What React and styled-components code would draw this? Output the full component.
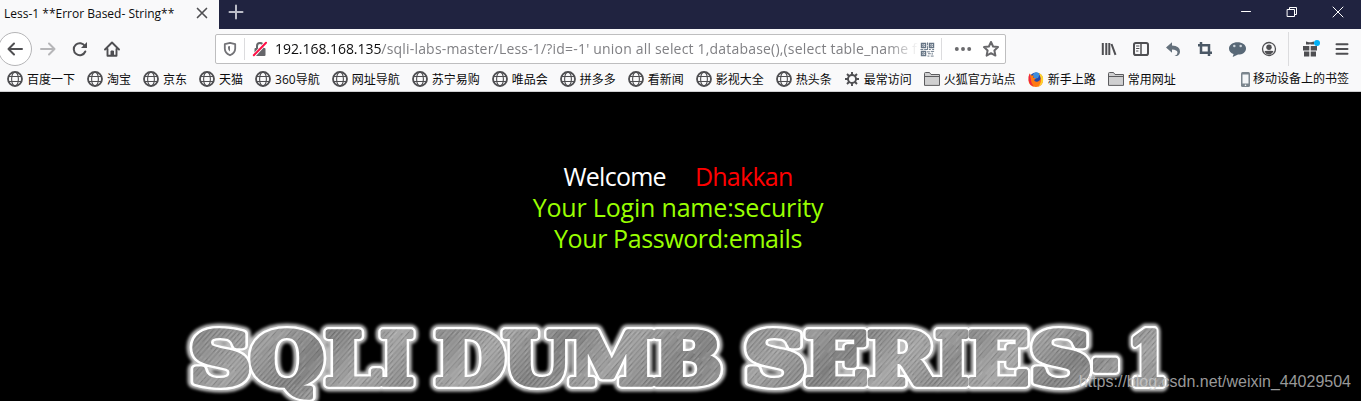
import React from "react"
import styled, { createGlobalStyle } from "styled-components"

const GlobalStyle = createGlobalStyle`
  body {
    margin: 0;
    background: #000;
    overflow: hidden;
    font-family: "Open Sans", "Noto Sans CJK SC", sans-serif;
  }
  svg {
    display: block;
    flex: none;
  }
`
const Window = styled.div`
  width: 1361px;
  height: 401px;
  overflow: hidden;
  background: #000;
`
const TabStrip = styled.div`
  display: flex;
  height: 29px;
  background: #202340;
`
const Tab = styled.div`
  display: flex;
  align-items: center;
  justify-content: space-between;
  box-sizing: border-box;
  width: 219px;
  height: 29px;
  padding: 0 11px 3px 4px;
  background: #f9f9fa;
  color: #0c0c0d;
  font-size: 12px;
  white-space: nowrap;
`
const NewTab = styled.div`
  padding: 4px 9px;
`
const WindowControls = styled.div`
  display: flex;
  margin-left: auto;
`
const ControlButton = styled.div`
  display: flex;
  justify-content: center;
  width: 46px;
  padding-top: 4px;
`
const NavBar = styled.div`
  display: flex;
  align-items: center;
  height: 40px;
  background: #f9f9fa;
`
const BackButton = styled.div`
  display: flex;
  align-items: center;
  justify-content: center;
  box-sizing: border-box;
  width: 34px;
  height: 34px;
  margin-left: -2px;
  border: 1px solid #b5b5b7;
  border-radius: 50%;
  background: #fff;
`
const ToolButton = styled.div`
  display: flex;
  align-items: center;
  justify-content: center;
  width: 32px;
  height: 32px;
`
const UrlBar = styled.div`
  display: flex;
  align-items: center;
  box-sizing: border-box;
  width: 791px;
  height: 30px;
  margin-left: 87px;
  padding: 0 6px;
  border: 1px solid #bebebf;
  border-radius: 2px;
  background: #fff;
`
const Divider = styled.div`
  width: 1px;
  height: ${props => props.$height}px;
  margin: ${props => props.$margin};
  background: #dcdcde;
`
const Url = styled.div`
  width: 644px;
  margin-left: 7px;
  margin-right: 1px;
  overflow: hidden;
  color: #808084;
  font-size: 14px;
  line-height: 24px;
  letter-spacing: 0.19px;
  white-space: nowrap;
  mask-image: linear-gradient(to right, #000 612px, transparent 644px);
`
const Host = styled.span`
  color: #0c0c0d;
  letter-spacing: -0.05px;
`
const Tools = styled.div`
  display: flex;
  align-items: center;
  margin-left: auto;
  padding-right: 3px;
`
const Bookmarks = styled.div`
  display: flex;
  gap: 12px;
  box-sizing: border-box;
  height: 23px;
  padding: 0 12px 0 7px;
  border-bottom: 1px solid #cfcfd1;
  background: #f9f9fa;
`
const Bookmark = styled.div`
  display: flex;
  align-items: center;
  gap: ${props => props.$gap || 4}px;
  height: 20px;
  margin-left: ${props => (props.$right ? "auto" : "0")};
  color: #0c0c0d;
  font-size: 12px;
  line-height: 20px;
  white-space: nowrap;
`
const Label = styled.span`
  padding-top: 1px;
`
const Page = styled.div`
  position: relative;
  height: 309px;
  background: #000;
`
const Login = styled.div`
  padding: 69px 5px 0 0;
  height: 94px;
  font-size: 25px;
  line-height: 31px;
  text-align: center;
`
const Line = styled.div`
  color: ${props => props.$color || "#99ff00"};
  letter-spacing: ${props => props.$spacing || "0"};
`
const Name = styled.span`
  margin-left: 29px;
  color: #f00;
`
const Watermark = styled.div`
  position: absolute;
  right: 10px;
  bottom: 9px;
  color: rgba(205, 205, 205, 0.75);
  font-family: "Liberation Sans", sans-serif;
  font-size: 16px;
  line-height: 20px;
`

const Icon = ({ size = 16, children, color = "#4f4f52", w = 2 }) => (
  <svg
    width={size}
    height={size}
    viewBox="0 0 16 16"
    fill="none"
    stroke={color}
    strokeWidth={w}
    strokeLinecap="round"
    strokeLinejoin="round"
  >
    {children}
  </svg>
)

const Globe = () => (
  <Icon w={1.1}>
    <circle cx="8" cy="8" r="7" strokeWidth="1.8" />
    <ellipse cx="8" cy="8" rx="3.4" ry="7" />
    <path d="M1.5 5.5h13M1.5 10.5h13" />
  </Icon>
)
const Gear = () => (
  <Icon w={1.9}>
    <circle cx="8" cy="8" r="4" />
    <path
      d="M8 1v3M8 12v3M1 8h3M12 8h3M3 3l2 2M11 11l2 2M3 13l2-2M11 5l2-2"
      strokeLinecap="butt"
    />
  </Icon>
)
const Folder = () => (
  <Icon w={1} color="#5c5c5f">
    <path d="M.5 14V2.5Q.5 1.5 1.5 1.5h4l1.5 2h8.5V14z" fill="#cfcfd0" />
    <path d="M1 5.5h14.500" />
  </Icon>
)
const Firefox = () => (
  <Icon>
    <circle cx="8" cy="8.200" r="6.800" fill="#2748a8" stroke="none" />
    <path d="M5 3q3-3.500 7 0l-2 4-4 1z" fill="#3d8fe0" stroke="none" />
    <path
      d="M1.500 2.500l2 2 2.500 0-1 2 3 1-2 1.500q1 2.500 4 1.500 3-1 2.500-5l-1.500-3.500q4 2 4 7 0 6.500-7 7Q.5 15.500.5 9 .4 5 1.500 2.500z"
      fill="#ff7a13"
      stroke="none"
    />
    <path d="M11 2q4.500 2 4.200 7-.5 5-5 6.500 3.500-4 2.800-8z" fill="#ffd52e" stroke="none" />
    <path d="M1.500 2.500Q0 6 .7 10q1 4 5 5.500-3-4-3-8z" fill="#ee2644" stroke="none" />
  </Icon>
)
const Phone = () => (
  <svg width="9" height="15" viewBox="0 0 9 15">
    <rect width="9" height="15" rx="1.500" fill="#7b858d" />
    <path d="M1.500 2.500h6v9h-6z" fill="#f4f6f8" />
    <circle cx="4.500" cy="13.200" r=".8" fill="#fff" />
  </svg>
)

const Back = () => (
  <Icon>
    <path d="M15 8H1.500M7 2.500L1.500 8 7 13.500" />
  </Icon>
)
const Forward = () => (
  <Icon color="#b6b6b8">
    <path d="M1 8h13.500M9 2.500L14.500 8 9 13.500" />
  </Icon>
)
const Reload = () => (
  <Icon>
    <path d="M13.300 10.500A6 6 0 1 1 13 5.200" />
    <path d="M15 1v6H9z" fill="#4f4f52" stroke="none" />
  </Icon>
)
const Home = () => (
  <Icon w={1.9}>
    <path d="M1 8.500l7-7 7 7M3.500 8v6.800h9V8" />
    <path d="M7 14v-4h2.500v4z" fill="#4f4f52" strokeWidth="1" />
  </Icon>
)
const Shield = () => (
  <Icon color="#737377" w={1.800}>
    <path d="M8 1.800l5.200 1.400v4.300q0 4.500-5.200 6.800-5.200-2.300-5.200-6.800V3.200z" />
    <path d="M8 5v5.500Q6 9 6 7V5.500z" fill="#737377" stroke="none" />
  </Icon>
)
const Lock = () => (
  <Icon color="#66666a">
    <path d="M5 7V5a3 3 0 0 1 6 0v2" />
    <rect x="2.500" y="7" width="11" height="8" rx="1" fill="#66666a" stroke="none" />
    <path d="M2 14.500L14 1.500" stroke="#fff" strokeWidth="3.500" />
    <path d="M1.800 14.300L14 1.700" stroke="#ff0f45" />
  </Icon>
)
const QrCode = () => (
  <Icon color="#667585" w={1.300} size={15}>
    <path d="M1.500 1.500h4.500V6H1.500zM10 1.500h4.500V6H10zM1.500 10H6v4.500H1.500z" strokeLinejoin="miter" />
    <path
      d="M3 3h1.500v1.500H3zM11.500 3H13v1.500h-1.500zM3 11.500h1.500V13H3zM8 1v2M8 5v2M1 8h2M5 8h3M10 8h1M13.500 8h1M8 10.500h2M12 10h2.500M9 12.500h2M13 12v1M8.500 15h1M12 15h2"
      strokeWidth="1"
      strokeLinecap="square"
    />
  </Icon>
)
const Dots = () => (
  <Icon size={18}>
    <g fill="#6a6a6d" stroke="none">
      <circle cx="2.500" cy="8" r="1.750" />
      <circle cx="8" cy="8" r="1.750" />
      <circle cx="13.500" cy="8" r="1.750" />
    </g>
  </Icon>
)
const Star = () => (
  <Icon color="#68686b" w={2}>
    <path d="M8 1l2.100 4.500 4.900.6-3.600 3.400 1 5.100L8 12.200l-4.400 2.400 1-5.100L1 6.100l4.900-.6z" />
  </Icon>
)
const Library = () => (
  <Icon>
    <path d="M1.800 2v12M5.300 2v12M8.300 2v12M10.500 3l4 10.800" strokeLinecap="butt" />
  </Icon>
)
const Sidebar = () => (
  <Icon>
    <rect x="1" y="2" width="14" height="12" rx="1.800" />
    <path d="M8 2v12" strokeWidth="1.500" />
    <path d="M3.500 5h2.500M3.500 7.500h2.500M3.500 10h1.500" strokeWidth="1" />
  </Icon>
)
const Undo = () => (
  <Icon>
    <path
      d="M1 6.500L7 1.300v3.200q8 .5 8 6 0 3-3 4.500H9.500q3-1 3-3.300Q12.300 8.700 7 8.500v3.200z"
      fill="#65717c"
      stroke="none"
    />
  </Icon>
)
const Crop = () => (
  <Icon color="#4c5966" w={2.500}>
    <path d="M4 1v10.800h11M1 4.200h11V15" strokeLinecap="butt" strokeLinejoin="miter" />
  </Icon>
)
const Chat = () => (
  <Icon size={17}>
    <path
      d="M8 1.200c4.300 0 8 2.300 8 5.800s-3.200 5.800-7.500 5.800L3.500 15l.8-2.700C1.800 11.500 0 9.600 0 7.200c0-3.500 3.700-6 8-6z"
      fill="#596977"
      stroke="none"
    />
    <circle cx="5" cy="4.700" r="1.200" fill="#ccd4da" stroke="none" />
    <circle cx="11" cy="4.700" r="1.200" fill="#ccd4da" stroke="none" />
  </Icon>
)
const Account = () => (
  <Icon w={1.300}>
    <circle cx="8" cy="8" r="6.500" />
    <circle cx="8" cy="6.200" r="2.700" fill="#4f4f52" stroke="none" />
    <path d="M3.500 10q4.500-.5 9 0-1 3.500-4.500 3.500T3.500 10z" fill="#4f4f52" stroke="none" />
  </Icon>
)
const Gift = () => (
  <svg width="20" height="18" viewBox="0 0 20 18" fill="#4f4f52">
    <path d="M3 6h6.300v4.500H3zM10.700 6H17v4.500h-6.300zM4 11.500h5.300V16.500H4zM10.700 11.500H16v5h-5.300z" />
    <path d="M6 1.500l3 .8h2l3-.8v3h-3.500L10 3.500l-.5 1H6z" />
    <circle cx="18" cy="2.500" r="3" fill="#f9f9fa" stroke="#f9f9fa" />
    <circle cx="17" cy="3" r="3" fill="#00b0f5" />
  </svg>
)
const Menu = () => (
  <Icon>
    <path d="M2.500 3.200h11M2.500 8h11M2.500 12.800h11" />
  </Icon>
)

const bookmarks = [
  [Globe, "百度一下"],
  [Globe, "淘宝"],
  [Globe, "京东"],
  [Globe, "天猫"],
  [Globe, "360导航"],
  [Globe, "网址导航"],
  [Globe, "苏宁易购"],
  [Globe, "唯品会"],
  [Globe, "拼多多"],
  [Globe, "看新闻"],
  [Globe, "影视大全"],
  [Globe, "热头条"],
  [Gear, "最常访问"],
  [Folder, "火狐官方站点"],
  [Firefox, "新手上路"],
  [Folder, "常用网址"],
]

const tools = [Library, Sidebar, Undo, Crop, Chat, Account]

// character, left edge, width
const letters = [
  ["S", 190, 61],
  ["Q", 250, 74],
  ["L", 325, 56],
  ["I", 380, 34],
  ["D", 435, 70],
  ["U", 503, 68],
  ["M", 569, 86],
  ["B", 653, 69],
  ["S", 744, 62],
  ["E", 805, 63],
  ["R", 867, 69],
  ["I", 935, 34],
  ["E", 968, 61],
  ["S", 1030, 62],
  ["-", 1092, 27],
  ["1", 1128, 40],
]

const Letters = props => (
  <g {...props}>
    {letters.map(([char, x, width]) => (
      <text key={x} x={x} y="292" textLength={width} lengthAdjust="spacingAndGlyphs">
        {char}
      </text>
    ))}
  </g>
)

const BannerSvg = styled.svg`
  margin-top: -163px;
  font-family: "DejaVu Serif", serif;
  font-size: 71px;
  font-weight: bold;
`

const Banner = () => (
  <BannerSvg width="1361" height="309" viewBox="0 0 1361 309" strokeLinejoin="round">
    <defs>
      <linearGradient id="metal" gradientUnits="userSpaceOnUse" x1="190" y1="238" x2="330" y2="370" spreadMethod="reflect">
        <stop offset="0" stopColor="#828282" />
        <stop offset="0.3" stopColor="#a2a2a2" />
        <stop offset="0.55" stopColor="#808080" />
        <stop offset="0.8" stopColor="#a8a8a8" />
        <stop offset="1" stopColor="#8c8c8c" />
      </linearGradient>
      <pattern id="brushed" width="11" height="90" patternUnits="userSpaceOnUse" patternTransform="rotate(42)">
        <path d="M1 0v90M4.300 0v60M8 20v70" stroke="#fff" strokeOpacity=".2" strokeWidth=".6" />
        <path d="M2.500 0v90M6.200 10v70M9.600 0v50" stroke="#222" strokeOpacity=".2" strokeWidth=".6" />
      </pattern>
      <filter id="glow" x="-5%" y="-30%" width="110%" height="160%">
        <feGaussianBlur stdDeviation="1.600" />
      </filter>
    </defs>
    <Letters fill="#fff" stroke="#fff" strokeWidth="15" filter="url(#glow)" opacity=".75" />
    <Letters fill="#fff" stroke="#fff" strokeWidth="10" />
    <Letters fill="url(#metal)" stroke="url(#metal)" strokeWidth="5.500" />
    <Letters fill="url(#brushed)" stroke="url(#brushed)" strokeWidth="5.500" />
  </BannerSvg>
)

const App = () => {
  return (
    <Window>
      <GlobalStyle />
      <TabStrip>
        <Tab>
          <span>Less-1 **Error Based- String**</span>
          <Icon size={12} w={2.200}>
            <path d="M2 2l12 12M14 2L2 14" />
          </Icon>
        </Tab>
        <NewTab>
          <Icon color="#bcbdc8">
            <path d="M8 1.500v13M1.500 8h13" />
          </Icon>
        </NewTab>
        <WindowControls>
          <ControlButton>
            <Icon color="#fff" w={1}>
              <path d="M3.500 7.500h9" />
            </Icon>
          </ControlButton>
          <ControlButton>
            <Icon color="#fff" w={1}>
              <path d="M3.500 5.500h7v7h-7zM5.500 5.500v-2h7v7h-2" strokeLinejoin="miter" />
            </Icon>
          </ControlButton>
          <ControlButton>
            <Icon color="#fff" w={1}>
              <path d="M3 3l10 10M13 3L3 13" />
            </Icon>
          </ControlButton>
        </WindowControls>
      </TabStrip>
      <NavBar>
        <BackButton>
          <Back />
        </BackButton>
        <ToolButton>
          <Forward />
        </ToolButton>
        <ToolButton>
          <Reload />
        </ToolButton>
        <ToolButton>
          <Home />
        </ToolButton>
        <UrlBar>
          <Shield />
          <Divider $height={22} $margin="0 7px 0 6px" />
          <Lock />
          <Url>
            <Host>192.168.168.135</Host>
            /sqli-labs-master/Less-1/?id=-1' union all select 1,database(),(select table_name f
          </Url>
          <QrCode />
          <Divider $height={22} $margin="0 12px 0 6px" />
          <Dots />
          <Divider $height={0} $margin="0 0 0 10px" />
          <Star />
        </UrlBar>
        <Tools>
          {tools.map((Tool, i) => (
            <ToolButton key={i}>
              <Tool />
            </ToolButton>
          ))}
          <Divider $height={34} $margin="0 5px 0 3px" />
          <ToolButton>
            <Gift />
          </ToolButton>
          <ToolButton>
            <Menu />
          </ToolButton>
        </Tools>
      </NavBar>
      <Bookmarks>
        {bookmarks.map(([Glyph, label]) => (
          <Bookmark key={label}>
            <Glyph />
            <Label>{label}</Label>
          </Bookmark>
        ))}
        <Bookmark $right $gap={3}>
          <Phone />
          移动设备上的书签
        </Bookmark>
      </Bookmarks>
      <Page>
        <Login>
          <Line $color="#fff" $spacing="-0.75px">
            Welcome<Name>Dhakkan</Name>
          </Line>
          <Line $spacing="-0.18px">Your Login name:security</Line>
          <Line $spacing="-0.4px">Your Password:emails</Line>
        </Login>
        <Banner />
        <Watermark>https://blog.csdn.net/weixin_44029504</Watermark>
      </Page>
    </Window>
  )
}

export default App
